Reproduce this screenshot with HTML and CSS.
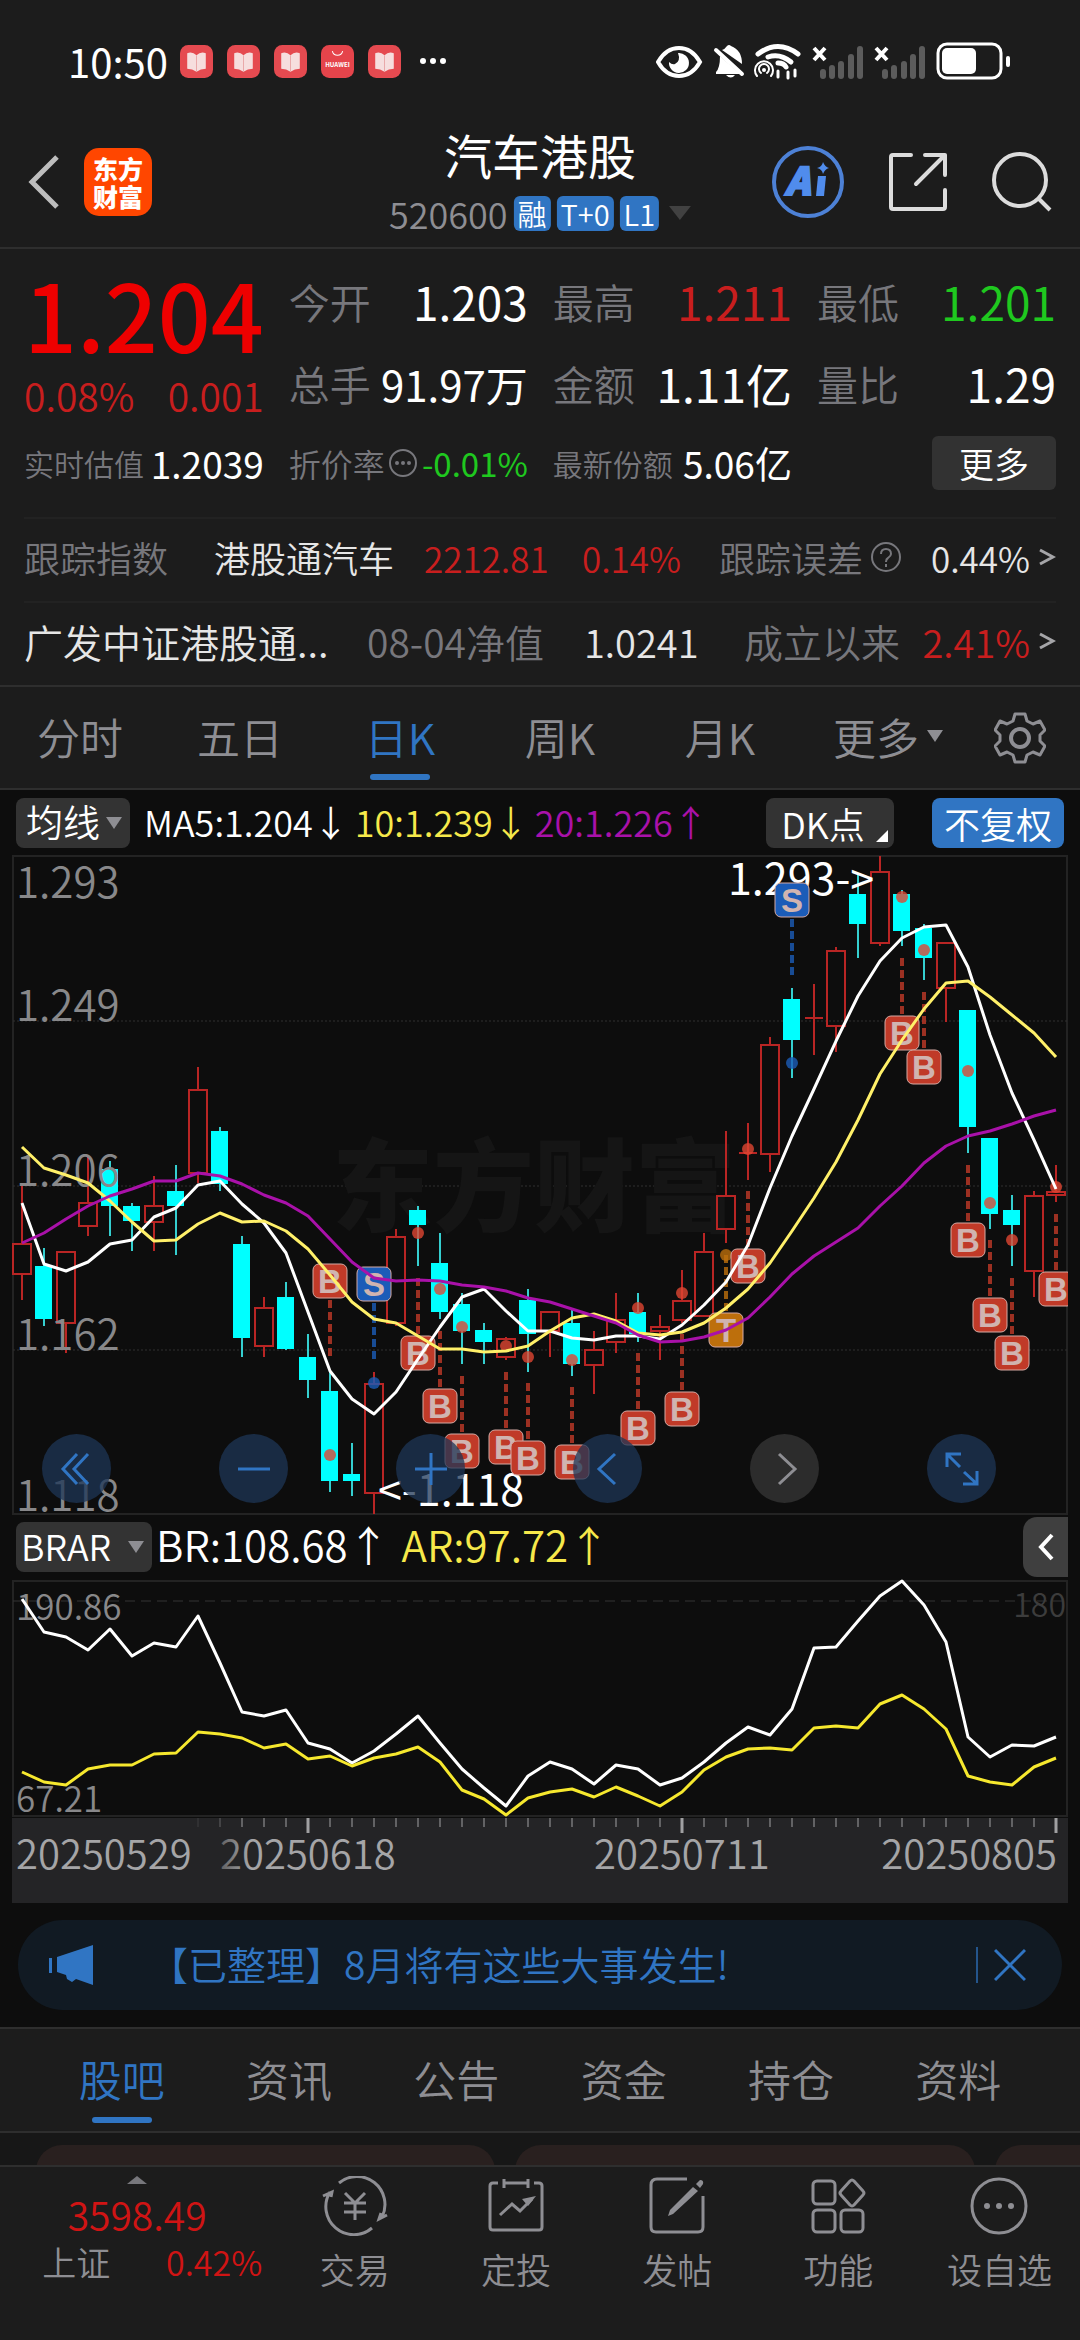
FILE: index.html
```
<!DOCTYPE html>
<html lang="zh-CN">
<head>
    <meta charset="UTF-8">
    <meta name="viewport" content="width=device-width, initial-scale=1.0">
    <title>汽车港股 520600</title>
    <link rel="stylesheet" href="styles.css">
</head>
<body>
    <div class="status-bar">
        <span class="clock">10:50</span>
        <svg class="app-dot" viewBox="0 0 32 32"><rect width="32" height="32" rx="8" fill="#e54a50"/><path d="M7 8q5-2 9 2q4-4 9-2v15q-5 0-9 3q-4-3-9-3z" fill="#f6dede"/><path d="M16 10v16" stroke="#e9a9aa" stroke-width="1"/></svg>
        <svg class="app-dot" viewBox="0 0 32 32"><rect width="32" height="32" rx="8" fill="#e54a50"/><path d="M7 8q5-2 9 2q4-4 9-2v15q-5 0-9 3q-4-3-9-3z" fill="#f6dede"/><path d="M16 10v16" stroke="#e9a9aa" stroke-width="1"/></svg>
        <svg class="app-dot" viewBox="0 0 32 32"><rect width="32" height="32" rx="8" fill="#e54a50"/><path d="M7 8q5-2 9 2q4-4 9-2v15q-5 0-9 3q-4-3-9-3z" fill="#f6dede"/><path d="M16 10v16" stroke="#e9a9aa" stroke-width="1"/></svg>
        <svg class="app-dot" viewBox="0 0 32 32"><rect width="32" height="32" rx="8" fill="#e5444b"/><path d="M11 6q1 4 5 4t5-4" fill="none" stroke="#fff" stroke-width="1"/><text x="16" y="21" font-size="6" font-weight="bold" fill="#fff" text-anchor="middle">HUAWEI</text></svg>
        <svg class="app-dot" viewBox="0 0 32 32"><rect width="32" height="32" rx="8" fill="#e54a50"/><path d="M7 8q5-2 9 2q4-4 9-2v15q-5 0-9 3q-4-3-9-3z" fill="#f6dede"/><path d="M16 10v16" stroke="#e9a9aa" stroke-width="1"/></svg>
        <svg class="more-dots" viewBox="0 0 28 8"><circle cx="4" cy="4" r="3" fill="#fff"/><circle cx="14" cy="4" r="3" fill="#fff"/><circle cx="24" cy="4" r="3" fill="#fff"/></svg>
        <svg class="sys-icons" viewBox="0 0 356 38">
            <!-- eye -->
            <path d="M2 20Q10 6 23 6T44 20Q36 34 23 34T2 20z" fill="none" stroke="#fff" stroke-width="4"/>
            <path d="M22 11a10 10 0 1 1-9 9q3 3 6 2q6-3 3-11z" fill="#fff"/>
            <!-- muted bell -->
            <path d="M66 8q3-1 5-4q2-2 4 0q11 4 11 18zM64 14l20 18H60v-2q4-4 4-16zM70 33h9q-4 5-9 0z" fill="#fff"/>
            <path d="M60 8l26 24" stroke="#fff" stroke-width="4" stroke-linecap="round"/>
            <!-- wifi with hotspot -->
            <g fill="none" stroke="#fff" stroke-linecap="round">
                <path d="M102 12q20-15 40 0" stroke-width="5"/>
                <path d="M112 15q12-4 23 5" stroke-width="5"/>
                <path d="M122 21q6 0 8 4" stroke-width="5"/>
                <path d="M101 34a9 9 0 1 1 14 0" stroke-width="2"/>
                <path d="M105 31a5 5 0 1 1 6 0" stroke-width="2"/>
                <path d="M122 29v6M132 30v6M139 28v6" stroke-width="3"/>
            </g>
            <circle cx="108" cy="28" r="2" fill="#fff"/>
            <!-- two empty sim slots -->
            <g stroke="#fff" stroke-width="4"><path d="M158 6l11 12M169 6l-11 12M220 6l11 12M231 6l-11 12"/></g>
            <g stroke="#5c5c5c" stroke-width="6" stroke-linecap="round">
                <path d="M167 30v4M176 26v8M185 22v12M195 15v19M204 7v27"/>
                <path d="M229 30v4M238 26v8M248 22v12M257 15v19M266 7v27"/>
            </g>
            <!-- battery -->
            <rect x="282" y="2" width="63" height="34" rx="9" fill="none" stroke="#fff" stroke-width="3"/>
            <rect x="286" y="6" width="34" height="26" rx="5" fill="#fff"/>
            <rect x="350" y="14" width="4" height="11" rx="2" fill="#fff"/>
        </svg>
    </div>

    <header class="header">
        <button class="icon-btn back" aria-label="返回"><svg viewBox="0 0 34 56"><path d="M30 3L5 28l25 25" fill="none" stroke="#bdbdbd" stroke-width="5"/></svg></button>
        <div class="logo"><span>东方</span><span>财富</span></div>
        <div class="title">
            <h1>汽车港股</h1>
            <div class="sub">
                <span class="code">520600</span><span class="tag">融</span><span class="tag">T+0</span><span class="tag">L1</span>
                <svg class="sub-tri" viewBox="0 0 22 14"><path d="M0 0h22L11 14z" fill="#414141"/></svg>
            </div>
        </div>
        <button class="icon-btn" aria-label="AI"><svg class="i72" viewBox="0 0 72 72"><circle cx="36" cy="36" r="34" fill="none" stroke="#4d81d6" stroke-width="4"/><text x="13" y="49" font-size="38" font-weight="900" font-style="italic" fill="#508cec" stroke="#508cec" stroke-width="2">A</text><path d="M46 30h8l-2 20h-8z" fill="#508cec"/><path d="M51 16q2 5 6 6q-4 1-6 6q-1-5-6-6q5-1 6-6z" fill="#508cec"/></svg></button>
        <button class="icon-btn" aria-label="分享"><svg class="i60" viewBox="0 0 60 60"><g fill="none" stroke="#dcdcdc" stroke-width="4" stroke-linecap="round" stroke-linejoin="round"><path d="M23 3H5q-2 0-2 2v50q0 2 2 2h50q2 0 2-2V38"/><path d="M37 3h20v20M57 3L28 32"/></g></svg></button>
        <button class="icon-btn" aria-label="搜索"><svg class="i60" viewBox="0 0 60 60"><circle cx="28" cy="28" r="26" fill="none" stroke="#dcdcdc" stroke-width="4"/><path d="M46 46l12 12" stroke="#dcdcdc" stroke-width="4"/></svg></button>
    </header>

    <section class="quote">
        <div class="price-box">
            <strong class="price">1.204</strong>
            <div class="change"><span>0.08%</span><span>0.001</span></div>
        </div>
        <div class="cell"><span class="label">今开</span><b>1.203</b></div>
        <div class="cell"><span class="label">最高</span><b class="up">1.211</b></div>
        <div class="cell"><span class="label">最低</span><b class="down">1.201</b></div>
        <div class="cell"><span class="label">总手</span><b class="fit">91.97万</b></div>
        <div class="cell"><span class="label">金额</span><b>1.11亿</b></div>
        <div class="cell"><span class="label">量比</span><b>1.29</b></div>
        <div class="cell small"><span class="label">实时估值</span><b>1.2039</b></div>
        <div class="cell small"><span class="label mid">折价率</span><svg class="tip" viewBox="0 0 30 30"><circle cx="15" cy="15" r="13" fill="none" stroke="#77777c" stroke-width="2"/><g fill="#77777c"><circle cx="9" cy="15" r="2"/><circle cx="15" cy="15" r="2"/><circle cx="21" cy="15" r="2"/></g></svg><b class="down rate">-0.01%</b></div>
        <div class="cell small"><span class="label">最新份额</span><b>5.06亿</b></div>
        <div class="cell more"><button>更多</button></div>
    </section>

    <section class="links">
        <a class="row track" href="#index">
            <span class="grey">跟踪指数</span><span>港股通汽车</span><span class="up num">2212.81</span><span class="up num">0.14%</span>
            <span class="pair"><span class="grey">跟踪误差</span><svg class="tip q" viewBox="0 0 32 32"><circle cx="16" cy="16" r="14" fill="none" stroke="#77777c" stroke-width="2"/><path d="M11 13q0-5 5-5t5 5q0 2-3 4q-2 1-2 4M16 23v3" fill="none" stroke="#77777c" stroke-width="2"/></svg></span>
            <span class="end"><span class="num">0.44%</span><svg class="chev" viewBox="0 0 18 18"><path d="M2 2l13 7-13 7" fill="none" stroke="#a5a5a8" stroke-width="3"/></svg></span>
        </a>
        <a class="row fund" href="#fund">
            <span class="name">广发中证港股通...</span><span class="grey">08-04净值</span><span class="val">1.0241</span><span class="grey">成立以来</span>
            <span class="end"><span class="up val">2.41%</span><svg class="chev" viewBox="0 0 18 18"><path d="M2 2l13 7-13 7" fill="none" stroke="#a5a5a8" stroke-width="3"/></svg></span>
        </a>
    </section>

    <nav class="k-tabs">
        <button>分时</button><button>五日</button><button class="active">日K</button><button>周K</button><button>月K</button>
        <button class="k-more">更多<svg class="tri" viewBox="0 0 16 12"><path d="M0 0h16L8 12z" fill="#8e8e93"/></svg></button>
        <button class="gear" aria-label="设置"><svg viewBox="0 0 52 52"><path d="M21 2h10l2 7 6 3 7-3 5 9-5 5v6l5 5-5 9-7-3-6 3-2 7H21l-2-7-6-3-7 3-5-9 5-5v-6l-5-5 5-9 7 3 6-3z" fill="none" stroke="#8e8e93" stroke-width="3" stroke-linejoin="round"/><circle cx="26" cy="26" r="9" fill="none" stroke="#8e8e93" stroke-width="4"/></svg></button>
    </nav>

    <main>
        <div class="ma-bar">
            <span class="pick"><select aria-label="主图指标"><option>均线</option></select></span>
            <span class="ma">MA5:1.204↓</span>
            <span class="ma yellow">10:1.239↓</span>
            <span class="ma purple">20:1.226↑</span>
            <button class="dk">DK点</button>
            <button class="fq">不复权</button>
        </div>

        <div class="k-wrap">
            <svg id="kChart" class="chart" viewBox="12 855 1056 660"></svg>
            <div class="tools">
                <button aria-label="最左"><svg viewBox="0 0 34 34"><path d="M17 2L3 17l14 15M28 2L14 17l14 15" /></svg></button>
                <button aria-label="缩小"><svg viewBox="0 0 34 34"><path d="M1 17h32"/></svg></button>
                <button aria-label="放大"><svg viewBox="0 0 34 34"><path d="M1 17h32M17 1v32"/></svg></button>
                <button aria-label="左移"><svg viewBox="0 0 34 34"><path d="M24 2L8 17l16 15"/></svg></button>
                <button class="off" aria-label="右移"><svg viewBox="0 0 34 34"><path d="M11 2l16 15-16 15"/></svg></button>
                <button aria-label="全屏"><svg viewBox="0 0 34 34"><path d="M2 15V2h14M2 2l13 13M32 19v13H18M32 32L19 20"/></svg></button>
            </div>
        </div>

        <div class="sub-bar">
            <span class="pick wide"><select aria-label="副图指标"><option>BRAR</option></select></span>
            <span class="ind">BR:108.68↑</span>
            <span class="ind yellow">AR:97.72↑</span>
            <button class="drawer" aria-label="展开"><svg viewBox="0 0 16 28"><path d="M14 2L3 14l11 12" fill="none" stroke="#fff" stroke-width="4"/></svg></button>
        </div>

        <svg id="subChart" class="chart" viewBox="12 1579 1056 324"></svg>

        <div class="notice">
            <svg class="horn" viewBox="0 0 46 40"><path d="M46 0v40l-17-6-4 3-5-3-1-4-9-3V12zM2 13h3v15H2z" fill="#3075c3"/></svg>
            <a href="#notice">【已整理】8月将有这些大事发生!</a>
            <button aria-label="关闭"><svg viewBox="0 0 32 32"><path d="M1 1l30 30M31 1L1 31" stroke="#3075c3" stroke-width="3"/></svg></button>
        </div>
    </main>

    <nav class="info-tabs">
        <button class="active">股吧</button><button>资讯</button><button>公告</button><button>资金</button><button>持仓</button><button>资料</button>
    </nav>
    <div class="cards"><div class="card"></div><div class="card"></div><div class="card"></div></div>

    <footer class="bottom-bar">
        <a class="sh-index" href="#sh">
            <svg viewBox="0 0 20 8"><path d="M0 8L10 0l10 8z" fill="#77777c"/></svg>
            <span class="points">3598.49</span>
            <span class="line"><span>上证</span><span class="pct">0.42%</span></span>
        </a>
        <a href="#trade"><svg viewBox="0 0 66 60"><g fill="none" stroke="#8e8e93" stroke-width="3"><path d="M17 7a28 28 0 0 1 43 34M50 52A28 28 0 0 1 8 16M1 20l9-4-1 5M65 39l-8 4 2-6"/><path d="M23 17l10 10 10-10M22 27h22M22 36h22M33 27v17"/></g></svg><span>交易</span></a>
        <a href="#plan"><svg viewBox="0 0 60 60"><g fill="none" stroke="#8e8e93" stroke-width="3"><path d="M12 7H7q-3 0-3 3v41q0 3 3 3h46q3 0 3-3V10q0-3-3-3h-5M18 7h24M18 3v9M42 3v9"/><path d="M14 39l12-11 8 7 12-12"/></g><path d="M36 23l14-3-8 10z" fill="#8e8e93"/></svg><span>定投</span></a>
        <a href="#post"><svg viewBox="0 0 60 60"><path d="M40 3H10Q4 3 4 9v42q0 5 5 5h42q5 0 5-5V20" fill="none" stroke="#8e8e93" stroke-width="3"/><path d="M46 11l5 4-25 23-5 2 2-6zM49 8l4-4q4 0 3 4l-3 4z" fill="#8e8e93"/></svg><span>发帖</span></a>
        <a href="#func"><svg viewBox="0 0 60 60"><g fill="none" stroke="#8e8e93" stroke-width="3"><rect x="5" y="5" width="22" height="23" rx="4"/><rect x="5" y="34" width="22" height="22" rx="4"/><rect x="33" y="34" width="22" height="22" rx="4"/><path d="M42 5q2-2 4 0l9 10q2 2 0 4l-9 10q-2 2-4 0l-9-10q-2-2 0-4z"/></g></svg><span>功能</span></a>
        <a href="#fav"><svg viewBox="0 0 60 60"><circle cx="30" cy="30" r="27" fill="none" stroke="#8e8e93" stroke-width="3"/><g fill="#8e8e93"><circle cx="18" cy="30" r="3"/><circle cx="30" cy="30" r="3"/><circle cx="42" cy="30" r="3"/></g></svg><span>设自选</span></a>
    </footer>

    <script>
        // direction, high, body top, body bottom, low (r = up, c = down)
        const candles = [
            ['r',1183,1243,1274,1300], ['c',1248,1266,1319,1326], ['r',1251,1251,1323,1353], ['r',1157,1202,1226,1236],
            ['c',1161,1169,1206,1236], ['c',1203,1206,1221,1251], ['r',1176,1205,1222,1251], ['c',1165,1191,1206,1255],
            ['r',1067,1089,1173,1183], ['c',1127,1131,1184,1191], ['c',1236,1244,1338,1357], ['r',1297,1307,1346,1357],
            ['c',1282,1297,1349,1350], ['c',1334,1357,1380,1398], ['c',1372,1391,1481,1492], ['c',1443,1474,1481,1496],
            ['r',1372,1383,1493,1514], ['r',1229,1236,1323,1326], ['c',1206,1210,1225,1266], ['c',1233,1263,1312,1319],
            ['c',1293,1304,1331,1364], ['c',1323,1330,1342,1364], ['r',1337,1338,1357,1360], ['c',1289,1300,1334,1372],
            ['r',1311,1311,1331,1357], ['c',1308,1323,1364,1376], ['r',1331,1349,1365,1394], ['r',1293,1319,1342,1353],
            ['c',1293,1312,1334,1342], ['r',1315,1326,1331,1360], ['r',1270,1300,1320,1323], ['r',1233,1251,1316,1316],
            ['r',1131,1195,1229,1243], ['r',1123,1153,1153,1180], ['r',1037,1044,1154,1172], ['c',988,999,1040,1078],
            ['r',984,1018,1018,1055], ['r',947,950,1026,1052], ['c',875,894,924,958], ['r',856,871,943,946],
            ['c',890,894,931,946], ['c',924,928,958,980], ['r',942,942,988,1022], ['c',1010,1010,1127,1153],
            ['c',1138,1138,1214,1229], ['c',1195,1210,1225,1266], ['r',1191,1195,1271,1297], ['r',1165,1191,1195,1202]
        ];
        const ma5 = [1203,1264,1271,1262,1244,1240,1217,1208,1185,1181,1204,1223,1253,1312,1371,1399,1414,1392,1359,1327,1297,1289,1311,1331,1331,1338,1340,1336,1336,1339,1325,1305,1282,1245,1188,1136,1089,1041,996,961,938,927,925,967,1035,1093,1140,1189];
        const ma10 = [1147,1168,1175,1183,1201,1222,1241,1240,1224,1213,1222,1221,1231,1249,1275,1302,1319,1323,1336,1349,1349,1352,1351,1346,1331,1318,1314,1321,1333,1335,1332,1323,1308,1289,1263,1231,1198,1162,1120,1074,1040,1009,983,981,997,1015,1033,1057];
        const ma20 = [1243,1233,1219,1206,1196,1189,1181,1181,1173,1176,1184,1195,1203,1216,1239,1262,1278,1281,1280,1281,1285,1287,1291,1298,1302,1309,1316,1323,1335,1342,1341,1337,1330,1318,1297,1274,1256,1242,1228,1206,1186,1163,1146,1136,1131,1124,1116,1110];
        // candle index, letter, badge centre, dot
        const marks = [
            [14,'B',1281,1455], [16,'S',1284,1383], [18,'B',1353,1233], [19,'B',1406,1289], [20,'B',1451,1327],
            [22,'B',1447,1346], [23,'B',1458,1357], [25,'B',1462,1360], [28,'B',1428,1308], [30,'B',1409,1293],
            [32,'T',1330,1255], [33,'B',1266,1149], [35,'S',900,1063], [40,'B',1033,897], [41,'B',1067,950],
            [43,'B',1240,1071], [44,'B',1315,1203], [45,'B',1353,1240], [47,'B',1289,1187]
        ];
        const br = [1599,1632,1637,1650,1629,1656,1643,1647,1616,1663,1712,1716,1710,1743,1749,1763,1751,1734,1716,1743,1769,1788,1806,1776,1762,1769,1784,1765,1769,1785,1778,1762,1743,1727,1735,1709,1648,1647,1621,1596,1581,1605,1642,1737,1757,1745,1746,1737];
        const ar = [1772,1782,1785,1769,1765,1765,1754,1753,1732,1734,1738,1748,1744,1759,1756,1766,1758,1754,1747,1762,1790,1799,1815,1798,1792,1789,1797,1787,1796,1806,1792,1770,1757,1749,1748,1750,1728,1726,1728,1704,1695,1709,1729,1776,1782,1785,1767,1758];

        const px = i => 22 + i * 22;
        const line = (arr, color) => `<polyline points="${arr.map((y, i) => px(i) + ',' + y).join(' ')}" fill="none" stroke="${color}" stroke-width="3" stroke-linejoin="round"/>`;
        const colors = { B: '#c03a28', S: '#1b5cb8', T: '#bd6f0c' };

        let k = '<rect x="13" y="856" width="1054" height="658" fill="none" stroke="#232323" stroke-width="2"/>';
        [1021, 1186, 1350].forEach(y => k += `<path d="M13 ${y}H1067" stroke="#303030" stroke-dasharray="2 2"/>`);
        k += '<text class="watermark" x="332" y="1224">东方财富</text>';
        candles.forEach(([c, h, t, b, l], i) => {
            const x = px(i);
            const up = c === 'r';
            k += `<path d="M${x} ${h}V${t}M${x} ${b}V${l}" stroke="${up ? '#b92524' : '#35cfd0'}" stroke-width="2"/>`;
            if (t === b) k += `<path d="M${x - 9} ${t}h18" stroke="#b92524" stroke-width="2"/>`;
            else if (up) k += `<rect x="${x - 9}" y="${t + 1}" width="18" height="${b - t - 1}" fill="none" stroke="#b92524" stroke-width="2"/>`;
            else k += `<rect x="${x - 9}" y="${t}" width="17" height="${b - t}" fill="#00ffff"/>`;
        });
        [['1.293',898],['1.249',1021],['1.206',1186],['1.162',1350],['1.118',1511]].forEach(([s, y]) => k += `<text class="axis" x="16" y="${y}">${s}</text>`);
        k += '<text class="extreme" x="728" y="895">1.293-&gt;</text><text class="extreme" x="378" y="1506">&lt;-1.118</text>';
        marks.forEach(([i, s, y, dot]) => {
            const x = px(i);
            const above = y < dot && s !== 'T';
            const y1 = above ? y + 19 : y - 75;
            const y2 = above ? y + 75 : y - 18;
            k += `<path d="M${x} ${y1}V${y2}" stroke="${colors[s]}" stroke-opacity=".8" stroke-width="4" stroke-dasharray="8 4"/>`;
            k += `<circle cx="${x}" cy="${dot}" r="6" fill="${s === 'B' ? '#e04632' : colors[s]}" fill-opacity=".8"/>`;
            k += `<rect x="${x - 17}" y="${y - 17}" width="34" height="34" rx="6" fill="${colors[s]}" stroke="#d5aaa4" stroke-width="1"/>`;
            k += `<text class="mark" x="${x}" y="${y + 12}">${s}</text>`;
        });
        k += line(ma5, '#ffffff') + line(ma10, '#fff069') + line(ma20, '#a911a9');
        document.getElementById('kChart').innerHTML = k;

        let s = '<rect x="13" y="1581" width="1054" height="235" fill="none" stroke="#232323" stroke-width="2"/>';
        s += '<path d="M13 1601H1067" stroke="#343434" stroke-width="1" stroke-dasharray="10 6"/>';
        s += '<text class="sub-axis" x="16" y="1620">190.86</text><text class="sub-axis" x="16" y="1812">67.21</text><text class="sub-axis dim" x="1066" y="1617" text-anchor="end">180</text>';
        s += line(br, '#ffffff') + line(ar, '#f6e82e');
        s += '<rect x="12" y="1818" width="1056" height="85" fill="#242426"/>';
        for (let i = 8; i < 48; i++) {
            const major = [13, 30, 47].includes(i);
            s += `<path d="M${px(i)} 1818v${major ? 15 : 9}" stroke="#a0a0a2" stroke-width="${major ? 3 : 1}" opacity="${i === 8 ? .2 : i === 9 ? .5 : 1}"/>`;
        }
        s += '<defs><linearGradient id="fade" gradientUnits="userSpaceOnUse" x1="215" x2="250"><stop offset="0" stop-color="#555557"/><stop offset="1" stop-color="#a5a5a7"/></linearGradient></defs>';
        s += '<text class="date" x="16" y="1869">20250529</text><text class="date" x="220" y="1869" fill="url(#fade)">20250618</text><text class="date" x="594" y="1869">20250711</text><text class="date" x="1057" y="1869" text-anchor="end">20250805</text>';
        document.getElementById('subChart').innerHTML = s;
    </script>
</body>
</html>
```
FILE: styles.css
```
* { box-sizing: border-box; }
body { margin: 0; min-height: 100vh; display: flex; flex-direction: column; background: #1c1c1c; color: #fff; font-family: "Noto Sans CJK SC", sans-serif; font-weight: 350; }
button { padding: 0; border: none; background: none; color: inherit; font: inherit; cursor: pointer; }
a { color: inherit; text-decoration: none; }
svg { display: block; flex: none; }
svg text { font-family: "Noto Sans CJK SC", sans-serif; }
.up { color: #c81e1e; }
.down { color: #1fc81f; }
.yellow { color: #f6e84a; }
.purple { color: #a911a9; }
.grey { color: #77777c; }

.status-bar { display: flex; align-items: center; height: 122px; padding: 0 68px; }
.clock { margin-right: 12px; font-size: 40px; line-height: 40px; font-weight: 400; }
.app-dot { width: 33px; height: 33px; margin-right: 14px; }
.more-dots { width: 28px; height: 8px; margin-left: 4px; }
.sys-icons { width: 356px; height: 38px; margin-left: auto; }

.header { position: relative; display: flex; align-items: center; height: 127px; padding: 0 28px 6px 27px; border-bottom: 2px solid #2e2e2e; }
.back { margin-right: 23px; }
.back svg { width: 34px; height: 56px; }
.logo { display: flex; flex-direction: column; justify-content: center; align-items: center; width: 68px; height: 68px; margin-right: auto; border-radius: 15px; background: #ff4600; font-size: 25px; line-height: 28px; font-weight: 900; }
.title { position: absolute; left: 50%; top: 5px; transform: translateX(-50%); display: flex; flex-direction: column; align-items: center; }
.title h1 { margin: 0; font-size: 48px; line-height: 54px; font-weight: 400; }
.sub { display: flex; align-items: center; gap: 6px; line-height: 64px; }
.code { color: #8e8e93; font-size: 36px; }
.tag { padding: 0 4px; border-radius: 6px; background: #3075c3; font-size: 29px; line-height: 35px; }
.sub-tri { width: 22px; height: 14px; margin-left: 4px; }
.icon-btn + .icon-btn { margin-left: 44px; }
.i72 { width: 72px; height: 72px; }
.i60 { width: 60px; height: 60px; }

.quote { display: grid; grid-template-columns: repeat(4, 1fr); grid-template-rows: 82px 82px 78px; column-gap: 25px; padding: 11px 24px 15px; }
.price-box { grid-row: span 2; color: #ee0000; }
.price { display: block; font-size: 93px; line-height: 106px; text-align: center; font-weight: 500; }
.change { display: flex; justify-content: space-between; font-size: 39px; line-height: 58px; color: #c81e1e; }
.cell { display: flex; align-items: center; justify-content: space-between; white-space: nowrap; }
.label { color: #77777c; font-size: 41px; }
.cell b { font-size: 46px; font-weight: 400; }
.cell b.fit { font-size: 42px; }
.small .label { font-size: 30px; }
.small .mid { font-size: 32px; }
.small b { font-size: 37px; }
.small b.rate { font-size: 33px; }
.tip { width: 30px; height: 30px; }
.more { justify-content: flex-end; }
.more button { width: 124px; height: 54px; border-radius: 6px; background: #323232; font-size: 35px; line-height: 50px; }

.links { border-bottom: 2px solid #2e2e2e; color: #e6e6e6; }
.row { display: grid; align-items: center; height: 84px; margin: 0 24px; padding-bottom: 6px; border-top: 2px solid #222; font-size: 36px; white-space: nowrap; }
.track { grid-template-columns: 190fr 210fr 158fr 137fr 183fr 154fr; }
.fund { grid-template-columns: 343fr 217fr 160fr 160fr 152fr; font-size: 39px; }
.num { font-size: 35px; }
.val { font-size: 38px; }
.pair { display: flex; align-items: center; gap: 7px; }
.q { width: 32px; height: 32px; }
.end { display: flex; align-items: center; justify-content: flex-end; gap: 8px; }
.chev { width: 18px; height: 18px; }

.k-tabs { display: grid; grid-template-columns: repeat(6, 4fr) 3fr; height: 103px; border-bottom: 2px solid #2e2e2e; color: #8e8e93; font-size: 43px; }
.k-tabs button, .info-tabs button { position: relative; display: flex; flex: 1; align-items: center; justify-content: center; gap: 8px; padding-bottom: 4px; }
.k-tabs .gear { padding-bottom: 0; }
.k-tabs .k-more { padding-left: 16px; }
.gear svg { width: 52px; height: 52px; }
.tri { width: 16px; height: 12px; }
.k-tabs .active, .info-tabs .active { color: #3075c3; }
.active::after { content: ""; position: absolute; left: 50%; bottom: 8px; width: 60px; height: 6px; margin-left: -30px; border-radius: 3px; background: #3075c3; }

main { background: #0d0d0d; }
.ma-bar, .sub-bar { display: flex; align-items: center; height: 65px; padding: 0 16px; }
.sub-bar { height: 64px; }
.pick { position: relative; flex: none; width: 114px; height: 50px; margin-right: 14px; }
.pick select { width: 100%; height: 50px; padding: 0 10px 4px; border: none; border-radius: 8px; background: #333; color: #fff; font: inherit; font-size: 37px; line-height: 46px; appearance: none; }
.pick::after { content: ""; position: absolute; right: 8px; top: 19px; border: 8px solid transparent; border-top: 12px solid #8e8e93; border-bottom: none; }
.pick.wide { width: 136px; margin-right: 4px; }
.pick.wide select { font-size: 36px; padding: 0 5px 4px; }
.ma { margin-right: 6px; padding-bottom: 4px; font-size: 36px; white-space: nowrap; }
.dk, .fq { flex: none; height: 50px; border-radius: 8px; font-size: 36px; line-height: 46px; }
.dk { position: relative; width: 128px; margin-left: auto; padding-right: 14px; background: #333; }
.dk::after { content: ""; position: absolute; right: 6px; bottom: 6px; border-left: 12px solid transparent; border-bottom: 12px solid #fff; }
.fq { width: 132px; margin-left: 38px; background: #3075c3; }

.k-wrap { position: relative; margin: 0 12px; }
.chart { width: 100%; height: auto; }
#subChart { width: auto; margin: 0 12px; }
.watermark { font-size: 101px; font-weight: 900; fill: #151515; }
.axis { font-size: 42px; fill: #88888a; }
.extreme { font-size: 43px; font-weight: 400; fill: #fff; }
.mark { font: bold 33px "Liberation Sans", sans-serif; fill: #d0b4b0; text-anchor: middle; }
.sub-axis { font-size: 35px; fill: #88888a; }
.sub-axis.dim { font-size: 32px; fill: #3c3c3c; }
.date { font-size: 40px; }
.date:not([fill]) { fill: #a5a5a7; }
.tools { position: absolute; left: 30px; right: 72px; bottom: 12px; display: flex; justify-content: space-between; }
.tools button { display: grid; place-items: center; width: 69px; height: 69px; border-radius: 50%; background: rgba(29, 54, 86, .75); }
.tools svg { width: 34px; height: 34px; fill: none; stroke: #3075c3; stroke-width: 3; }
.tools .off { background: #2c2c2c; }
.tools .off svg { stroke: #8e8e93; }

.ind { margin-right: 12px; padding-bottom: 6px; font-size: 42px; line-height: 58px; white-space: nowrap; }
.drawer { display: grid; place-items: center; width: 45px; height: 60px; margin: 0 -4px 0 auto; border-radius: 14px 0 0 14px; background: #3f3f3f; }
.drawer svg { width: 16px; height: 28px; }

.notice { display: flex; align-items: center; height: 90px; margin: 17px 18px; padding: 0 36px 0 29px; border-radius: 45px; background: #111a23; color: #3075c3; font-size: 39px; }
.notice a { padding-bottom: 4px; }
.horn { width: 46px; height: 40px; margin-right: 56px; }
.notice button { margin-left: auto; padding-left: 16px; border-left: 2px solid #24558c; }
.notice button svg { width: 32px; height: 36px; }

.info-tabs { display: flex; height: 106px; padding: 0 38px; border-top: 2px solid #2e2e2e; border-bottom: 2px solid #2e2e2e; color: #8e8e93; font-size: 43px; }
.cards { display: flex; gap: 20px; height: 32px; padding: 12px 0 0 36px; overflow: hidden; background: #171717; }
.card { flex: none; width: 44%; height: 60px; border-radius: 26px; background: #29201f; }

.bottom-bar { display: flex; flex: 1; border-top: 2px solid #2e2e2e; color: #8e8e93; font-size: 35px; }
.bottom-bar > a { display: flex; flex: 161; flex-direction: column; align-items: center; padding-top: 9px; line-height: 50px; }
.bottom-bar > a > svg { height: 60px; margin-bottom: 8px; }
.bottom-bar > .sh-index { flex: 274; }
.bottom-bar > .sh-index > svg { width: 20px; height: 8px; margin: 0; }
.points { font-size: 39px; line-height: 60px; color: #d01414; }
.line { display: flex; align-self: flex-end; justify-content: space-between; width: 220px; margin-right: 12px; line-height: 36px; font-size: 34px; }
.pct { color: #d01414; }
```
